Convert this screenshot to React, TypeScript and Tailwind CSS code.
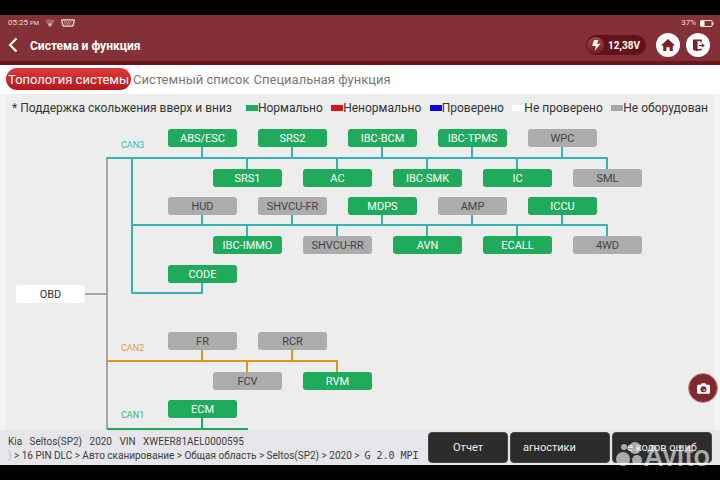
import { useState } from "react";

type Status = "normal" | "absent" | "root";

type EcuNode = {
  label: string;
  x: number;
  y: number;
  status: Status;
};

const statusClass: Record<Status, string> = {
  normal: "bg-[#1faa5c] text-white",
  absent: "bg-[#acacac] text-[#444444]",
  root: "bg-white text-[#333333]",
};

const nodes: EcuNode[] = [
  { label: "OBD", x: 16, y: 191, status: "root" },
  { label: "ABS/ESC", x: 168, y: 35, status: "normal" },
  { label: "SRS2", x: 258, y: 35, status: "normal" },
  { label: "IBC-BCM", x: 348, y: 35, status: "normal" },
  { label: "IBC-TPMS", x: 438, y: 35, status: "normal" },
  { label: "WPC", x: 528, y: 35, status: "absent" },
  { label: "SRS1", x: 213, y: 75, status: "normal" },
  { label: "AC", x: 303, y: 75, status: "normal" },
  { label: "IBC-SMK", x: 393, y: 75, status: "normal" },
  { label: "IC", x: 483, y: 75, status: "normal" },
  { label: "SML", x: 573, y: 75, status: "absent" },
  { label: "HUD", x: 168, y: 103, status: "absent" },
  { label: "SHVCU-FR", x: 258, y: 103, status: "absent" },
  { label: "MDPS", x: 348, y: 103, status: "normal" },
  { label: "AMP", x: 438, y: 103, status: "absent" },
  { label: "ICCU", x: 528, y: 103, status: "normal" },
  { label: "IBC-IMMO", x: 213, y: 142, status: "normal" },
  { label: "SHVCU-RR", x: 303, y: 142, status: "absent" },
  { label: "AVN", x: 393, y: 142, status: "normal" },
  { label: "ECALL", x: 483, y: 142, status: "normal" },
  { label: "4WD", x: 573, y: 142, status: "absent" },
  { label: "CODE", x: 168, y: 171, status: "normal" },
  { label: "FR", x: 168, y: 238, status: "absent" },
  { label: "RCR", x: 258, y: 238, status: "absent" },
  { label: "FCV", x: 213, y: 278, status: "absent" },
  { label: "RVM", x: 303, y: 278, status: "normal" },
  { label: "ECM", x: 168, y: 306, status: "normal" },
];

const legend = [
  { label: "Нормально", color: "bg-[#1faa5c]" },
  { label: "Ненормально", color: "bg-[#d91419]" },
  { label: "Проверено", color: "bg-[#0a06e0]" },
  { label: "Не проверено", color: "bg-white" },
  { label: "Не оборудован", color: "bg-[#a6a6a6]" },
];

const tabs = ["Топология системы", "Системный список", "Специальная функция"];

function StatusBar() {
  return (
    <div className="flex h-3.5 items-center justify-between pt-0.5 pr-1.5 pl-2 text-[8px] leading-3 text-[#f3dcdc]">
      <div className="flex items-center">
        <span>
          05:25 <span className="text-[6px]">PM</span>
        </span>
        <svg className="ml-1.5 h-2 w-2.5" viewBox="0 0 10 8" aria-hidden="true">
          <path d="M0 2.2C3 -.4 7 -.4 10 2.2L5 8Z" fill="#a2666a" />
          <path d="M2.6 5 5 8 7.4 5C6 3.9 4 3.9 2.6 5Z" fill="#d6b4b5" />
        </svg>
        <svg className="ml-1.5 h-2 w-3.5" viewBox="0 0 14 8" fill="none" aria-hidden="true">
          <path d="M1.5.8H12.5Q13.4.8 13.2 1.8L12.1 6.2Q11.9 7.2 11 7.2H3Q2.1 7.2 1.9 6.2L.8 1.8Q.6.8 1.5.8Z" stroke="#f3e4e4" strokeWidth="1.3" />
          <path d="M3 3H11M3.8 5H10.2" stroke="#f3e4e4" strokeDasharray="1.2 .7" />
        </svg>
      </div>
      <div className="flex items-center gap-1">
        <span>37%</span>
        <svg className="h-[7px] w-3.5" viewBox="0 0 14 7" aria-hidden="true">
          <rect x=".5" y=".5" width="11.5" height="6" rx=".6" fill="none" stroke="#f3e4e4" />
          <rect x="1" y="1" width="3.5" height="5" fill="#fff" />
          <rect x="12.3" y="2" width="1.2" height="3" fill="#f3e4e4" />
        </svg>
      </div>
    </div>
  );
}

function Header() {
  return (
    <header className="shrink-0 border-b-4 border-[#6b171c] bg-[#833036]">
      <StatusBar />
      <div className="flex h-8 items-center justify-between pr-2.5 pl-2">
        <div className="flex items-center gap-3">
          <button type="button" aria-label="Назад">
            <svg className="h-4 w-2.5" viewBox="0 0 10 16" fill="none" aria-hidden="true">
              <path d="M8.5 1.5 2 8l6.5 6.5" stroke="#fff" strokeWidth="2.2" />
            </svg>
          </button>
          <h1 className="pt-0.5 text-xs font-bold text-white">Система и функция</h1>
        </div>
        <div className="flex items-center">
          <div className="mr-2.5 flex h-5 items-center gap-1 rounded-full bg-[#651318] pr-1.5 pl-px">
            <span className="grid size-[17px] place-items-center rounded-full bg-linear-to-b from-[#a2444a] to-[#751c22]">
              <svg className="h-[11px] w-2.5" viewBox="0 0 10 11" aria-hidden="true">
                <path d="M3 0H7.4L6 3.8H9.4L3.6 11L4.8 6H1.2Z" fill="#fff" />
              </svg>
            </span>
            <span className="text-[10px] font-bold text-white">12,38V</span>
          </div>
          <button type="button" aria-label="Домой" className="mr-1.5 grid size-6 place-items-center rounded-full bg-white">
            <svg className="h-3 w-3.5" viewBox="0 0 14 12" aria-hidden="true">
              <path d="M7 0 13.6 6 12.7 7 11.8 6.3V12H8.6V8.2H5.4V12H2.2V6.3L1.3 7 .4 6Z" fill="#76242a" />
            </svg>
          </button>
          <button type="button" aria-label="Выход" className="grid size-6 place-items-center rounded-full bg-white">
            <svg className="h-[13px] w-[13px]" viewBox="0 0 13 13" fill="none" aria-hidden="true">
              <path d="M1 .8 5.6 2.4V12.6L1 10.8Z" fill="#76242a" />
              <path d="M1.2 1.3H9V3.6M9 9.4V10.7H5" stroke="#76242a" strokeWidth="1.4" />
              <path d="M7 6H9.8V4.3L12.8 6.5 9.8 8.7V7H7Z" fill="#76242a" />
            </svg>
          </button>
        </div>
      </div>
    </header>
  );
}

function Wires() {
  return (
    <svg className="absolute top-0 left-0 h-[336px] w-[720px]" viewBox="0 0 720 336" fill="none" strokeWidth="2" strokeLinejoin="round" aria-hidden="true">
      <path d="M85 200H107M107 63V335" stroke="#a6a6a6" />
      <path
        d="M107 64H607V75M202 53V64M292 53V64M382 53V64M472 53V64M562 53V64M247 64V75M337 64V75M427 64V75M517 64V75M132 64V199H202V189M132 131H607V142M202 121V131M292 121V131M382 121V131M472 121V131M562 121V131M247 131V142M337 131V142M427 131V142M517 131V142"
        stroke="#32b4b4"
      />
      <path d="M107 267H337V278M202 256V267M292 256V267M247 267V278" stroke="#de951d" />
      <path d="M107 335H248M202 324V335" stroke="#1faa5c" />
    </svg>
  );
}

function Topology() {
  return (
    <main className="relative mx-1.5 min-h-0 flex-1 overflow-hidden bg-[#ededed]">
      <div className="flex items-center gap-3.5 pt-1.5 pr-1.5 pl-1.5 text-xs leading-4 whitespace-nowrap text-[#333333]">
        <p>* Поддержка скольжения вверх и вниз</p>
        <ul className="flex flex-1 justify-between">
          {legend.map((item) => (
            <li key={item.label} className="flex items-center">
              <span className={`h-1.5 w-3 ${item.color}`} />
              {item.label}
            </li>
          ))}
        </ul>
      </div>
      <div className="absolute top-0 -left-1.5">
        <Wires />
        <span className="absolute top-[45px] left-[121px] text-[9px] leading-3 text-[#45b5c0]">CAN3</span>
        <span className="absolute top-[248px] left-[121px] text-[9px] leading-3 text-[#e2a03a]">CAN2</span>
        <span className="absolute top-[315px] left-[121px] text-[9px] leading-3 text-[#3fae6c]">CAN1</span>
        {nodes.map((node) => (
          <button
            key={node.label}
            type="button"
            className={`absolute h-[18px] w-[69px] rounded-[3px] pt-0.5 text-[11px] leading-3 whitespace-nowrap ${statusClass[node.status]}`}
            style={{ left: node.x, top: node.y }}
          >
            {node.label}
          </button>
        ))}
      </div>
    </main>
  );
}

function Footer() {
  const buttonClass =
    "h-[31px] overflow-hidden rounded-[4px] border border-[#454545] bg-[#2c2c2c] pt-0.5 text-[11px] whitespace-nowrap text-[#eeeeee]";

  return (
    <footer className="flex shrink-0 items-center justify-between bg-[#e6e5ea] py-0.5 pr-2 pl-2">
      <div className="pt-[3px] text-[10px] leading-[14px] whitespace-pre text-[#3c3c3c]">
        <p>Kia   Seltos(SP2)   2020   VIN   XWEER81AEL0000595</p>
        <p>
          <span className="text-[#bbbbbb]">)</span> &gt; 16 PIN DLC &gt; Авто сканирование &gt; Общая область &gt; Seltos(SP2) &gt; 2020 &gt;{"  "}
          <span className="font-['DejaVu_Sans_Mono',monospace]">G 2.0 MPI</span>
        </p>
      </div>
      <div className="flex gap-0.5">
        <button type="button" className={`${buttonClass} w-20`}>Отчет</button>
        <button type="button" className={`${buttonClass} w-[100px] pl-3 text-left`}>агностики</button>
        <button type="button" className={`${buttonClass} w-[100px]`}>е кодов ошиб</button>
      </div>
    </footer>
  );
}

function Watermark() {
  return (
    <div className="pointer-events-none absolute right-2.5 bottom-2.5 flex items-center text-white opacity-60">
      <svg className="size-7" viewBox="0 0 28 28" fill="currentColor" aria-hidden="true">
        <circle cx="8" cy="5" r="3" />
        <circle cx="19" cy="6" r="6" />
        <circle cx="7" cy="17" r="7" />
        <circle cx="21" cy="18" r="5" />
      </svg>
      <span className="text-[29px] leading-7 font-medium">Avito</span>
    </div>
  );
}

export default function App() {
  const [activeTab, setActiveTab] = useState(tabs[0]);

  return (
    <div className="relative flex h-screen flex-col bg-black py-[15px] font-[Roboto,'Noto_Sans',sans-serif]">
      <Header />
      <nav className="flex shrink-0 items-center bg-white px-1.5 pt-[3px] pb-1">
        {tabs.map((tab) => (
          <button
            key={tab}
            type="button"
            onClick={() => setActiveTab(tab)}
            className={`h-[22px] rounded-full px-0.5 pt-px text-[13px] whitespace-nowrap ${
              tab === activeTab ? "bg-linear-to-b from-[#e0393d] to-[#b5161c] text-white" : "text-[#777777]"
            }`}
          >
            {tab}
          </button>
        ))}
      </nav>
      <div className="flex min-h-0 flex-1 flex-col bg-[#f4f4f4]">
        <Topology />
      </div>
      <Footer />
      <button
        type="button"
        aria-label="Снимок экрана"
        className="absolute right-0.5 bottom-[77px] grid size-[30px] place-items-center rounded-full border border-[#c98f92] bg-[#80282e]"
      >
        <svg className="h-[11px] w-[13px]" viewBox="0 0 13 11" aria-hidden="true">
          <path d="M1.2 1.8H3.6L4.6.3H8.4L9.4 1.8H11.8Q13 1.8 13 3V9.6Q13 10.8 11.8 10.8H1.2Q0 10.8 0 9.6V3Q0 1.8 1.2 1.8Z" fill="#fff" />
          <circle cx="6.5" cy="6.2" r="3" fill="#80282e" />
          <circle cx="7.2" cy="6.9" r="1" fill="#d9b0b2" />
        </svg>
      </button>
      <Watermark />
    </div>
  );
}
